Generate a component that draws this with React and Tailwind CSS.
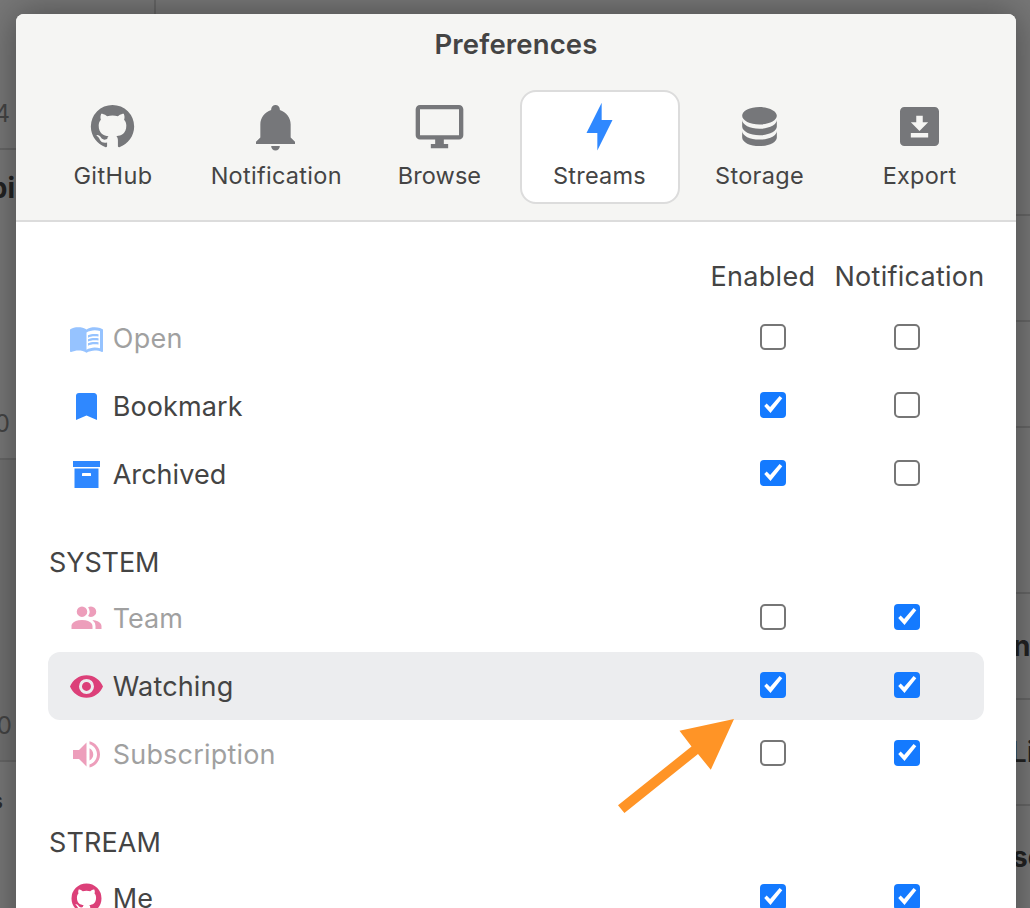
import React from 'react'

const ICONS = {
  github:
    'M12,2A10,10 0 0,0 2,12C2,16.42 4.87,20.17 8.84,21.5C9.34,21.58 9.5,21.27 9.5,21C9.5,20.77 9.5,20.14 9.5,19.31C6.73,19.91 6.14,17.97 6.14,17.97C5.68,16.81 5.03,16.5 5.03,16.5C4.12,15.88 5.1,15.9 5.1,15.9C6.1,15.97 6.63,16.93 6.63,16.93C7.5,18.45 8.97,18 9.54,17.76C9.63,17.11 9.89,16.67 10.17,16.42C7.95,16.17 5.62,15.31 5.62,11.5C5.62,10.39 6,9.5 6.65,8.79C6.55,8.54 6.2,7.5 6.75,6.15C6.75,6.15 7.59,5.88 9.5,7.17C10.29,6.95 11.15,6.84 12,6.84C12.85,6.84 13.71,6.95 14.5,7.17C16.41,5.88 17.25,6.15 17.25,6.15C17.8,7.5 17.45,8.54 17.35,8.79C18,9.5 18.38,10.39 18.38,11.5C18.38,15.32 16.04,16.16 13.81,16.41C14.17,16.72 14.5,17.33 14.5,18.26C14.5,19.6 14.5,20.68 14.5,21C14.5,21.27 14.66,21.59 15.17,21.5C19.14,20.16 22,16.42 22,12A10,10 0 0,0 12,2Z',
  bell: 'M21,19V20H3V19L5,17V11C5,7.9 7.03,5.17 10,4.29C10,4.19 10,4.1 10,4A2,2 0 0,1 12,2A2,2 0 0,1 14,4C14,4.1 14,4.19 14,4.29C16.97,5.17 19,7.9 19,11V17L21,19M14,21A2,2 0 0,1 12,23A2,2 0 0,1 10,21',
  monitor:
    'M21,16H3V4H21M21,2H3C1.89,2 1,2.89 1,4V16A2,2 0 0,0 3,18H10V20H8V22H16V20H14V18H21A2,2 0 0,0 23,16V4C23,2.89 22.1,2 21,2Z',
  bolt: 'M11 15H6L13 1V9H18L11 23V15Z',
  database:
    'M12,3C7.58,3 4,4.79 4,7C4,9.21 7.58,11 12,11C16.42,11 20,9.21 20,7C20,4.79 16.42,3 12,3M4,9V12C4,14.21 7.58,16 12,16C16.42,16 20,14.21 20,12V9C20,11.21 16.42,13 12,13C7.58,13 4,11.21 4,9M4,14V17C4,19.21 7.58,21 12,21C16.42,21 20,19.21 20,17V14C20,16.21 16.42,18 12,18C7.58,18 4,16.21 4,14Z',
  download:
    'M5,3H19A2,2 0 0,1 21,5V19A2,2 0 0,1 19,21H5A2,2 0 0,1 3,19V5A2,2 0 0,1 5,3M8,17H16V15H8V17M16,10H13.5V7H10.5V10H8L12,14L16,10Z',
  book: 'M21 5c-1.11-.35-2.33-.5-3.5-.5-1.95 0-4.05.4-5.5 1.5-1.45-1.1-3.55-1.5-5.5-1.5S2.45 4.9 1 6v14.65c0 .25.25.5.5.5.1 0 .15-.05.25-.05C3.1 20.45 5.05 20 6.5 20c1.95 0 4.05.4 5.5 1.5 1.35-.85 3.8-1.5 5.5-1.5 1.65 0 3.35.3 4.75 1.05.1.05.15.05.25.05.25 0 .5-.25.5-.5V6c-.6-.45-1.25-.75-2-1zm0 13.5c-1.1-.35-2.3-.5-3.5-.5-1.7 0-4.15.65-5.5 1.5V8c1.35-.85 3.8-1.5 5.5-1.5 1.2 0 2.4.15 3.5.5v11.5zM17.5 10.5c.88 0 1.73.09 2.5.26V9.24c-.79-.15-1.64-.24-2.5-.24-1.7 0-3.24.29-4.5.83v1.66c1.13-.64 2.7-.99 4.5-.99zM13 12.49v1.66c1.13-.64 2.7-.99 4.5-.99.88 0 1.73.09 2.5.26V11.9c-.79-.15-1.64-.24-2.5-.24-1.7 0-3.24.3-4.5.83zM17.5 14.33c-1.7 0-3.24.29-4.5.83v1.66c1.13-.64 2.7-.99 4.5-.99.88 0 1.73.09 2.5.26v-1.52c-.79-.16-1.64-.24-2.5-.24z',
  bookmark: 'M17,3H7A2,2 0 0,0 5,5V21L12,18L19,21V5C19,3.89 18.1,3 17,3Z',
  archive: 'M3,3H21V7H3V3M4,8H20V21H4V8M9.5,11A0.5,0.5 0 0,0 9,11.5V13H15V11.5A0.5,0.5 0 0,0 14.5,11H9.5Z',
  team: 'M16 17V19H2V17S2 13 9 13 16 17 16 17M12.5 7.5A3.5 3.5 0 1 0 9 11A3.5 3.5 0 0 0 12.5 7.5M15.94 13A5.32 5.32 0 0 1 18 17V19H22V17S22 13.37 15.94 13M15 4A3.39 3.39 0 0 0 13.07 4.59A5 5 0 0 1 13.07 10.41A3.39 3.39 0 0 0 15 11A3.5 3.5 0 0 0 15 4Z',
  eye: 'M12,9A3,3 0 0,0 9,12A3,3 0 0,0 12,15A3,3 0 0,0 15,12A3,3 0 0,0 12,9M12,17A5,5 0 0,1 7,12A5,5 0 0,1 12,7A5,5 0 0,1 17,12A5,5 0 0,1 12,17M12,4.5C7,4.5 2.73,7.61 1,12C2.73,16.39 7,19.5 12,19.5C17,19.5 21.27,16.39 23,12C21.27,7.61 17,4.5 12,4.5Z',
  volume:
    'M14,3.23V5.29C16.89,6.15 19,8.83 19,12C19,15.17 16.89,17.84 14,18.7V20.77C18,19.86 21,16.28 21,12C21,7.72 18,4.14 14,3.23M16.5,12C16.5,10.23 15.5,8.71 14,7.97V16C15.5,15.29 16.5,13.76 16.5,12M3,9V15H7L12,20V4L7,9H3Z',
}

function Icon({ name, className }) {
  return (
    <svg viewBox="0 0 24 24" fill="currentColor" aria-hidden="true" className={`shrink-0 ${className}`}>
      <path d={ICONS[name]} />
    </svg>
  )
}

const TABS = [
  { icon: 'github', label: 'GitHub', width: 'w-[160px]', tracking: 'tracking-[0.42px]' },
  { icon: 'bell', label: 'Notification', width: 'w-[166.5px]', tracking: 'tracking-[0.29px]' },
  { icon: 'monitor', label: 'Browse', width: 'w-[160px]', tracking: 'tracking-[0.08px]' },
  { icon: 'bolt', label: 'Streams', width: 'w-[160px]', tracking: 'tracking-[0.23px]', active: true },
  { icon: 'database', label: 'Storage', width: 'w-[160px]', tracking: 'tracking-[0.3px]' },
  { icon: 'download', label: 'Export', width: 'w-[160px]', tracking: 'tracking-[0.21px]' },
]

const LIBRARY = [
  { icon: 'book', label: 'Open', color: 'text-[#2f88ff]', tracking: 'tracking-[0.3px]' },
  { icon: 'bookmark', label: 'Bookmark', color: 'text-[#2f88ff]', tracking: 'tracking-[0.11px]', enabled: true },
  { icon: 'archive', label: 'Archived', color: 'text-[#2f88ff]', tracking: 'tracking-[0.05px]', enabled: true },
]

const SYSTEM = [
  { icon: 'team', label: 'Team', color: 'text-[#dc4079]', tracking: 'tracking-normal', notify: true },
  { icon: 'eye', label: 'Watching', color: 'text-[#dc4079]', tracking: 'tracking-[0.16px]', enabled: true, notify: true, hovered: true },
  { icon: 'volume', label: 'Subscription', color: 'text-[#dc4079]', tracking: 'tracking-[0.2px]', notify: true },
]

const STREAM = [
  { icon: 'github', label: 'Me', color: 'text-[#dc4079]', tracking: 'tracking-[0.11px]', enabled: true, notify: true },
]

function Tab({ icon, label, width, tracking, active }) {
  return (
    <div
      className={`flex h-[114px] shrink-0 flex-col items-center rounded-2xl border-2 pt-[9px] ${width} ${
        active ? 'border-[#dcdcdc] bg-white' : 'border-transparent'
      }`}
    >
      <Icon
        name={icon}
        className={`size-[52px] -translate-x-[0.5px] -translate-y-[0.4px] ${active ? 'text-[#2f88ff]' : 'text-[#76777a]'}`}
      />
      <span className={`mt-[7px] text-[23.5px] leading-[32px] ${tracking}`}>{label}</span>
    </div>
  )
}

function Checkbox({ checked }) {
  if (!checked) {
    return <div className="size-[26px] shrink-0 rounded-[5px] border-2 border-[#767676] bg-white" />
  }
  return (
    <div className="size-[26px] shrink-0 rounded-[4px] bg-[#147aff]">
      <svg viewBox="0 0 26 26" className="size-[26px]" aria-hidden="true">
        <path d="M4.2 14L6.7 11.4L10.1 15L19.6 4.1L22.3 6.3L10.5 20.9Z" fill="white" />
      </svg>
    </div>
  )
}

function Row({ icon, label, color, tracking, enabled, notify, hovered }) {
  return (
    <div className={`flex h-[68px] items-center rounded-xl pr-16 pl-5 ${hovered ? 'bg-[#ecedef]' : ''}`}>
      <div className={`flex flex-1 items-center ${enabled ? '' : 'opacity-50'}`}>
        <Icon name={icon} className={`size-[36px] translate-x-[0.5px] translate-y-[0.4px] ${color}`} />
        <span className={`mt-[2px] ml-[8.7px] text-[27px] leading-[40px] ${tracking}`}>{label}</span>
      </div>
      <div className="mb-[2px] flex gap-[108px]">
        <Checkbox checked={enabled} />
        <Checkbox checked={notify} />
      </div>
    </div>
  )
}

function SectionTitle({ children, tracking }) {
  return <h2 className={`mt-[35px] mb-px ml-px text-[27px] leading-[40px] ${tracking}`}>{children}</h2>
}

function Backdrop() {
  return (
    <div className="flex h-full justify-between bg-[#777777] text-[24px] leading-[30px] text-[#444444]">
      <div className="flex w-[156px] flex-col border-r-2 border-[#666666]">
        <div className="flex h-[150px] flex-col border-b-2 border-[#666666] pt-[99px]">
          <div className="flex w-[10px] justify-end">4</div>
        </div>
        <div className="flex h-[310px] flex-col border-b-2 border-[#666666] pt-[23px]">
          <div className="flex w-[15px] justify-end text-[28px] font-bold text-[#222222]">pi</div>
          <div className="mt-[206px] flex w-[10px] justify-end">0</div>
        </div>
        <div className="flex h-[302px] flex-col border-b-2 border-[#666666] bg-[#707070] pt-[251px]">
          <div className="flex w-[12px] justify-end">0</div>
        </div>
        <div className="flex w-[3px] flex-1 items-start justify-end bg-[#777777] pt-[24px] font-bold text-[#2c2c2c]">s</div>
      </div>
      <div className="w-[20px] text-[28px] font-bold whitespace-nowrap text-[#222222]">
        <div className="h-[216px] border-b-2 border-[#666666]" />
        <div className="h-[106px] border-b-2 border-[#666666]" />
        <div className="h-[106px] border-b-2 border-[#666666]" />
        <div className="h-[166px] border-b-2 border-[#666666]" />
        <div className="h-[106px] border-b-2 border-[#666666] pt-[37px] pl-[3px]">n</div>
        <div className="h-[106px] border-b-2 border-[#666666] pt-[37px] pl-px font-medium">Li</div>
        <div className="h-[102px] pt-[36px] pl-[2px]">se</div>
      </div>
    </div>
  )
}

export default function App() {
  return (
    <div className="relative h-[908px] w-[1030px] overflow-hidden font-['Inter','Liberation_Sans',sans-serif] text-[#444444]">
      <Backdrop />

      <div className="absolute top-[14px] left-[16px] h-[960px] w-[1000px] overflow-hidden rounded-lg bg-white shadow-[0_0_36px_rgba(0,0,0,0.38)]">
        <header className="h-[208px] border-b-2 border-[#dcdcdc] bg-[#f5f5f3]">
          <h1 className="pt-[10px] text-center text-[27.5px] leading-[40px] font-semibold tracking-[0.15px]">Preferences</h1>
          <nav className="mt-[26px] flex pl-[17px]">
            {TABS.map((tab) => (
              <Tab key={tab.label} {...tab} />
            ))}
          </nav>
        </header>

        <main className="px-8">
          <div className="flex h-[82px] pt-[35px] text-[27px] leading-[40px]">
            <span className="ml-auto w-[124px] tracking-[0.3px]">Enabled</span>
            <span className="w-[149.5px] tracking-[0.27px]">Notification</span>
          </div>
          {LIBRARY.map((item) => (
            <Row key={item.label} {...item} />
          ))}
          <SectionTitle tracking="tracking-[-0.13px]">SYSTEM</SectionTitle>
          {SYSTEM.map((item) => (
            <Row key={item.label} {...item} />
          ))}
          <SectionTitle tracking="tracking-[0.1px]">STREAM</SectionTitle>
          {STREAM.map((item) => (
            <Row key={item.label} {...item} />
          ))}
        </main>
      </div>

      <svg viewBox="0 0 118 96" className="absolute top-[718px] left-[617px] h-[96px] w-[118px]" aria-hidden="true">
        <path d="M1 87.3L74.5 28.5L62.5 12.7L117 1L93.8 51.8L81 36L7.4 95Z" fill="#ff9426" />
      </svg>
    </div>
  )
}
